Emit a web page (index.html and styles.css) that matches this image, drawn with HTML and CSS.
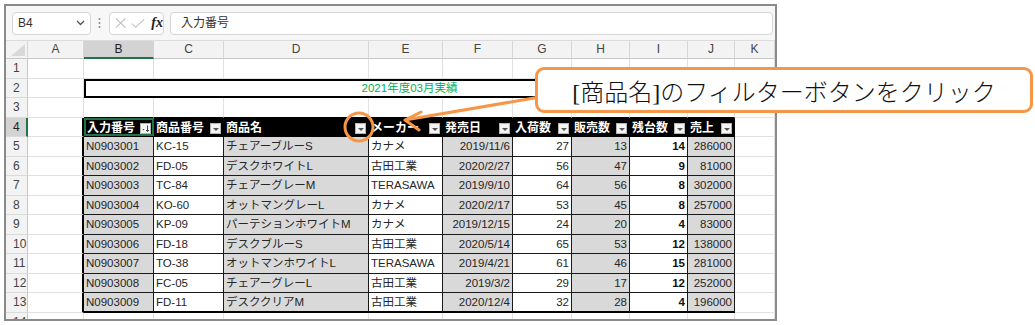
FILE: index.html
```html
<!DOCTYPE html>
<html lang="ja">
<head>
    <meta charset="UTF-8">
    <title>フィルターボタン</title>
    <link rel="stylesheet" href="styles.css">
</head>
<body>
    <div class="window">
        <div class="formula-bar">
            <div class="name-box">
                <span>B4</span>
                <svg width="9" height="6" viewBox="0 0 9 6"><path d="M1 1 L4.5 4.5 L8 1" fill="none" stroke="#555" stroke-width="1.3"/></svg>
            </div>
            <svg class="grip" width="3" height="12" viewBox="0 0 3 12"><circle cx="1.5" cy="2" r="1" fill="#888"/><circle cx="1.5" cy="6" r="1" fill="#888"/><circle cx="1.5" cy="10" r="1" fill="#888"/></svg>
            <div class="fx-box">
                <svg width="12" height="12" viewBox="0 0 12 12"><path d="M1 1 L11 11 M11 1 L1 11" stroke="#bdbdbd" stroke-width="1.1"/></svg>
                <svg width="15" height="11" viewBox="0 0 15 11"><path d="M1 5.5 L5 9.5 L14 1" fill="none" stroke="#bdbdbd" stroke-width="1.1"/></svg>
                <i class="fx">fx</i>
            </div>
            <div class="formula-input">入力番号</div>
        </div>

        <div class="sheet">
            <!-- column headers -->
            <div class="ch corner"><svg width="14" height="12" viewBox="0 0 14 12"><path d="M14 0 L14 12 L0 12 Z" fill="#d9d9d9"/></svg></div>
            <div class="ch">A</div><div class="ch sel">B</div><div class="ch">C</div><div class="ch">D</div><div class="ch">E</div>
            <div class="ch">F</div><div class="ch">G</div><div class="ch">H</div><div class="ch">I</div><div class="ch">J</div><div class="ch">K</div>

            <!-- row 1 -->
            <div class="rh">1</div><div class="c"></div><div class="c"></div><div class="c"></div><div class="c"></div><div class="c"></div>
            <div class="c"></div><div class="c"></div><div class="c"></div><div class="c"></div><div class="c"></div><div class="c"></div>

            <!-- row 2 -->
            <div class="rh">2</div><div class="c"></div>
            <div class="title">2021年度03月実績</div>
            <div class="c"></div>

            <!-- row 3 -->
            <div class="rh">3</div><div class="c"></div>
            <div class="c top"></div><div class="c top"></div><div class="c top"></div><div class="c top"></div><div class="c top"></div>
            <div class="c top"></div><div class="c top"></div><div class="c top"></div><div class="c top"></div><div class="c"></div>

            <!-- row 4: table header -->
            <div class="rh sel">4</div><div class="c edge"></div>
            <div class="th active">入力番号<span class="fb"><svg width="9" height="9" viewBox="0 0 9 9"><path d="M1.5 5 L3.5 5 L2.5 6.5 Z" fill="#444"/><path d="M6.5 1.5 L6.5 7.5 M5 6 L6.5 7.5 L8 6" fill="none" stroke="#444" stroke-width="1"/></svg></span></div>
            <div class="th">商品番号<span class="fb"><i class="tri"></i></span></div>
            <div class="th">商品名<span class="fb"><i class="tri"></i></span></div>
            <div class="th">メーカー<span class="fb"><i class="tri"></i></span></div>
            <div class="th">発売日<span class="fb"><i class="tri"></i></span></div>
            <div class="th">入荷数<span class="fb"><i class="tri"></i></span></div>
            <div class="th">販売数<span class="fb"><i class="tri"></i></span></div>
            <div class="th">残台数<span class="fb"><i class="tri"></i></span></div>
            <div class="th">売上<span class="fb"><i class="tri"></i></span></div>
            <div class="c"></div>

            <!-- row 5 -->
            <div class="rh">5</div><div class="c edge"></div>
            <div class="t g">N0903001</div><div class="t">KC-15</div><div class="t g">チェアーブルーS</div><div class="t">カナメ</div>
            <div class="t g n">2019/11/6</div><div class="t n">27</div><div class="t g n">13</div><div class="t n b">14</div><div class="t g n">286000</div>
            <div class="c"></div>

            <!-- row 6 -->
            <div class="rh">6</div><div class="c edge"></div>
            <div class="t g">N0903002</div><div class="t">FD-05</div><div class="t g">デスクホワイトL</div><div class="t">古田工業</div>
            <div class="t g n">2020/2/27</div><div class="t n">56</div><div class="t g n">47</div><div class="t n b">9</div><div class="t g n">81000</div>
            <div class="c"></div>

            <!-- row 7 -->
            <div class="rh">7</div><div class="c edge"></div>
            <div class="t g">N0903003</div><div class="t">TC-84</div><div class="t g">チェアーグレーM</div><div class="t">TERASAWA</div>
            <div class="t g n">2019/9/10</div><div class="t n">64</div><div class="t g n">56</div><div class="t n b">8</div><div class="t g n">302000</div>
            <div class="c"></div>

            <!-- row 8 -->
            <div class="rh">8</div><div class="c edge"></div>
            <div class="t g">N0903004</div><div class="t">KO-60</div><div class="t g">オットマングレーL</div><div class="t">カナメ</div>
            <div class="t g n">2020/2/17</div><div class="t n">53</div><div class="t g n">45</div><div class="t n b">8</div><div class="t g n">257000</div>
            <div class="c"></div>

            <!-- row 9 -->
            <div class="rh">9</div><div class="c edge"></div>
            <div class="t g">N0903005</div><div class="t">KP-09</div><div class="t g">パーテションホワイトM</div><div class="t">カナメ</div>
            <div class="t g n">2019/12/15</div><div class="t n">24</div><div class="t g n">20</div><div class="t n b">4</div><div class="t g n">83000</div>
            <div class="c"></div>

            <!-- row 10 -->
            <div class="rh">10</div><div class="c edge"></div>
            <div class="t g">N0903006</div><div class="t">FD-18</div><div class="t g">デスクブルーS</div><div class="t">古田工業</div>
            <div class="t g n">2020/5/14</div><div class="t n">65</div><div class="t g n">53</div><div class="t n b">12</div><div class="t g n">138000</div>
            <div class="c"></div>

            <!-- row 11 -->
            <div class="rh">11</div><div class="c edge"></div>
            <div class="t g">N0903007</div><div class="t">TO-38</div><div class="t g">オットマンホワイトL</div><div class="t">TERASAWA</div>
            <div class="t g n">2019/4/21</div><div class="t n">61</div><div class="t g n">46</div><div class="t n b">15</div><div class="t g n">281000</div>
            <div class="c"></div>

            <!-- row 12 -->
            <div class="rh">12</div><div class="c edge"></div>
            <div class="t g">N0903008</div><div class="t">FC-05</div><div class="t g">チェアーグレーL</div><div class="t">古田工業</div>
            <div class="t g n">2019/3/2</div><div class="t n">29</div><div class="t g n">17</div><div class="t n b">12</div><div class="t g n">252000</div>
            <div class="c"></div>

            <!-- row 13 -->
            <div class="rh">13</div><div class="c edge"></div>
            <div class="t g last">N0903009</div><div class="t last">FD-11</div><div class="t g last">デスククリアM</div><div class="t last">古田工業</div>
            <div class="t g n last">2020/12/4</div><div class="t n last">32</div><div class="t g n last">28</div><div class="t n b last">4</div><div class="t g n last">196000</div>
            <div class="c"></div>

            <!-- row 14 (cut off by the window edge) -->
            <div class="rh">14</div><div class="c"></div><div class="c"></div><div class="c"></div><div class="c"></div><div class="c"></div>
            <div class="c"></div><div class="c"></div><div class="c"></div><div class="c"></div><div class="c"></div><div class="c"></div>
        </div>
    </div>

    <!-- annotation -->
    <svg class="marks" width="1035" height="325" viewBox="0 0 1035 325">
        <circle cx="359" cy="127" r="14" fill="none" stroke="#f79646" stroke-width="3"/>
        <path d="M540 97 L405 120 M421 112 L405 120 L419 130" fill="none" stroke="#f79646" stroke-width="3" stroke-linecap="round" stroke-linejoin="round"/>
    </svg>
    <div class="callout">[商品名]のフィルターボタンをクリック</div>
</body>
</html>
```

FILE: styles.css
```css
* { box-sizing: border-box; }
body {
    margin: 0;
    padding: 4px 0 0 4px;
    width: 1035px;
    height: 325px;
    overflow: hidden;
    background: #fff;
    font-family: "Liberation Sans", "Noto Sans CJK JP", sans-serif;
    position: relative;
}
.window {
    width: 773px;
    height: 317px;
    border: 2px solid #8a8a8a;
    overflow: hidden;
    display: flex;
    flex-direction: column;
    background: #fff;
}

/* formula bar */
.formula-bar {
    height: 34px;
    flex: none;
    background: #f7f7f7;
    display: flex;
    align-items: center;
    padding: 0 2px 0 6px;
}
.name-box {
    width: 79px;
    height: 23px;
    background: #fff;
    border: 1px solid #d6d6d6;
    border-radius: 4px;
    display: flex;
    align-items: center;
    justify-content: space-between;
    padding: 0 5px 0 5px;
    font-size: 12px;
    color: #333;
}
.grip { margin: 0 8px 0 7px; }
.fx-box {
    width: 55px;
    height: 23px;
    background: #fff;
    border: 1px solid #d6d6d6;
    border-radius: 4px;
    display: flex;
    align-items: center;
    gap: 5px;
    padding: 0 0 0 5px;
}
.fx {
    font-family: "Liberation Serif", serif;
    font-weight: bold;
    font-size: 14px;
    color: #222;
    margin-left: 1px;
}
.formula-input {
    flex: 1;
    height: 23px;
    margin-left: 6px;
    background: #fff;
    border: 1px solid #d6d6d6;
    border-radius: 4px;
    padding: 0 10px;
    font-size: 12px;
    line-height: 21px;
    color: #333;
}

/* grid */
.sheet {
    flex: 1;
    display: grid;
    grid-template-columns: 22px 56px 70px 70px 145px 74px 70px 59px 58px 58px 47px 1fr;
    grid-template-rows: 18px repeat(13, 19.5px) 1fr;
    font-size: 11.5px;
    color: #262626;
    border-top: 1px solid #dcdcdc;
}
.ch {
    background: #f3f3f3;
    border-right: 1px solid #d6d6d6;
    border-bottom: 1px solid #c8c8c8;
    text-align: center;
    font-size: 12px;
    line-height: 17px;
    color: #444;
}
.ch.sel {
    background: #d3d3d3;
    border-bottom: 2px solid #217346;
    color: #222;
}
.ch.corner {
    display: flex;
    align-items: flex-end;
    justify-content: flex-end;
    padding: 0 2px 2px 0;
}
.rh {
    background: #f3f3f3;
    border-right: 1px solid #c8c8c8;
    border-bottom: 1px solid #dadada;
    padding-left: 7px;
    font-size: 12px;
    line-height: 19px;
    color: #444;
}
.rh.sel {
    background: #d3d3d3;
    border-right: 2px solid #217346;
    color: #222;
}
.c {
    border-right: 1px solid #e1e1e1;
    border-bottom: 1px solid #e1e1e1;
}
.c.top { border-bottom-color: #000; }
.c.edge { border-right: 2px solid #000; }

.title {
    grid-column: span 9;
    border: 2px solid #000;
    color: #00b050;
    font-size: 11.5px;
    text-align: center;
    line-height: 15px;
}

/* table */
.th {
    background: #000;
    color: #fff;
    font-weight: bold;
    font-size: 12px;
    display: flex;
    align-items: center;
    padding-left: 2px;
    border-bottom: 1px solid #000;
    white-space: nowrap;
}
.th.active {
    box-shadow: inset 0 0 0 2px #217346;
    padding-left: 3px;
}
.fb {
    margin-left: auto;
    margin-right: 3px;
    align-self: flex-end;
    margin-bottom: 2px;
    width: 11px;
    height: 11px;
    background: #f4f4f4;
    border: 1px solid #b5b5b5;
    display: flex;
    align-items: center;
    justify-content: center;
}
.tri {
    width: 0;
    height: 0;
    border-left: 3px solid transparent;
    border-right: 3px solid transparent;
    border-top: 3px solid #555;
    margin-top: 1px;
}
.t {
    border-right: 1px solid #1a1a1a;
    border-bottom: 1px solid #1a1a1a;
    padding: 0 2px;
    line-height: 18px;
    white-space: nowrap;
    overflow: hidden;
    background: #fff;
}
.t.g { background: #d9d9d9; }
.t.n { text-align: right; }
.t.b { font-weight: bold; color: #111; }
.t.last { border-bottom: 2px solid #000; }

/* annotation overlay */
.marks {
    position: absolute;
    left: 0;
    top: 0;
}
.callout {
    position: absolute;
    left: 535px;
    top: 67px;
    width: 498px;
    height: 46px;
    border: 3px solid #f79646;
    border-radius: 9px;
    background: #fff;
    display: flex;
    align-items: center;
    justify-content: center;
    font-family: "Liberation Serif", "Noto Sans CJK JP", serif;
    font-weight: 300;
    font-size: 24px;
    color: #111;
}
```
